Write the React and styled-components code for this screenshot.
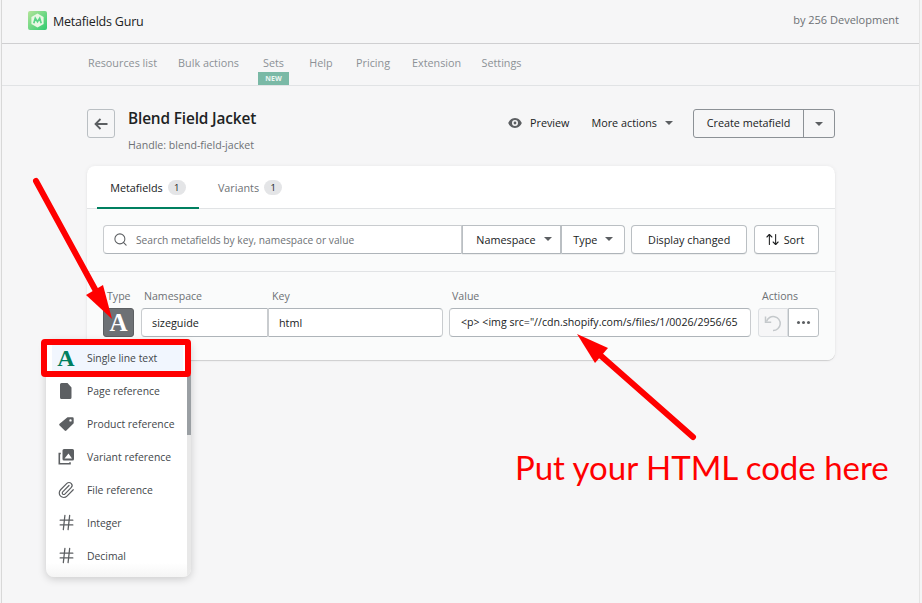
import styled, { createGlobalStyle } from "styled-components";
import { ArrowUpDown, Hash, Paperclip, Search } from "lucide-react";

const GlobalStyle = createGlobalStyle`
  html, body {
    margin: 0;
    padding: 0;
    height: 603px;
    overflow: hidden;
    background: #f4f4f5;
    font-family: "Open Sans", "Noto Sans", sans-serif;
    color: #202223;
  }
  * { box-sizing: border-box; }
`;

const Frame = styled.div`
  position: relative;
  width: 919px;
  height: 603px;
  margin-left: 1px;
  border-left: 1px solid #d8d8d8;
  border-right: 1px solid #e4e4e4;
  background: #f6f6f7;
`;

const TopBar = styled.header`
  height: 44px;
  display: flex;
  align-items: center;
  justify-content: space-between;
  padding: 0 20px 2px 26px;
  border-bottom: 1px solid #cfcfd1;
`;

const Brand = styled.div`
  display: flex;
  align-items: center;
  gap: 6px;
  font-size: 12.5px;
  letter-spacing: -0.2px;
`;

const BrandName = styled.span`
  padding-top: 2px;
`;

const Vendor = styled.div`
  font-size: 11px;
  color: #6d7175;
  margin-top: -3px;
`;

const NavBar = styled.nav`
  height: 42px;
  display: flex;
  padding-left: 86px;
  border-bottom: 1px solid #e1e3e5;
`;

const NavItem = styled.div`
  position: relative;
  width: ${(p) => p.$w}px;
  margin-right: ${(p) => p.$gap}px;
  padding-top: 12px;
  font-size: 10.8px;
  line-height: 14px;
  white-space: nowrap;
  text-align: center;
  color: #8c9196;
`;

const NewBadge = styled.span`
  position: absolute;
  left: -5px;
  bottom: 0;
  width: 31px;
  height: 13px;
  background: #7ab9a6;
  color: #eaf5f1;
  font-size: 7px;
  font-weight: 700;
  line-height: 14px;
  text-align: center;
`;

const Page = styled.main`
  width: 748px;
  margin-left: 85px;
`;

const PageHeader = styled.div`
  display: flex;
  justify-content: space-between;
  padding-top: 23px;
  height: 80px;
`;

const TitleGroup = styled.div`
  display: flex;
  gap: 13px;
`;

const BackButton = styled.div`
  width: 28px;
  height: 29px;
  display: flex;
  align-items: center;
  justify-content: center;
  border: 1px solid #babfc3;
  border-radius: 3px;
  color: #5c5f62;
`;

const Title = styled.h1`
  margin: -1px 0 0;
  font-size: 15.4px;
  font-weight: 600;
  line-height: 22px;
  letter-spacing: -0.15px;
`;

const Handle = styled.div`
  margin-top: 8px;
  font-size: 10.6px;
  line-height: 14px;
  color: #6d7175;
`;

const Actions = styled.div`
  display: flex;
  align-items: flex-start;
`;

const PlainAction = styled.div`
  height: 29px;
  display: flex;
  align-items: center;
  gap: ${(p) => p.$gap}px;
  margin-right: ${(p) => p.$mr}px;
  padding-bottom: 2px;
  font-size: 10.8px;
  color: #202223;
`;

const Caret = styled.span`
  display: inline-block;
  width: 0;
  height: 0;
  border-left: 4px solid transparent;
  border-right: 4px solid transparent;
  border-top: 4px solid #5c5f62;
`;

const SplitButton = styled.div`
  display: flex;
  height: 29px;
  border: 1px solid #8c9196;
  border-radius: 3px;
  font-size: 10.8px;
`;

const SplitMain = styled.div`
  width: 110px;
  display: flex;
  align-items: center;
  justify-content: center;
  padding-bottom: 2px;
  border-right: 1px solid #8c9196;
`;

const SplitSide = styled.div`
  width: 30px;
  display: flex;
  align-items: center;
  justify-content: center;
`;

const Card = styled.section`
  height: 194px;
  border-radius: 8px;
  background: #fff;
  box-shadow: 0 0 4px rgba(23, 24, 24, 0.06), 0 1px 1px rgba(0, 0, 0, 0.14);
  overflow: hidden;
`;

const Tabs = styled.div`
  height: 43px;
  display: flex;
  padding-left: 10px;
  border-bottom: 1px solid #e1e3e5;
`;

const Tab = styled.div`
  width: ${(p) => p.$w}px;
  height: 43px;
  display: flex;
  align-items: center;
  justify-content: center;
  gap: 5px;
  padding-top: 2px;
  font-size: 10.8px;
  color: ${(p) => (p.$active ? "#202223" : "#6d7175")};
  border-bottom: 2px solid ${(p) => (p.$active ? "#008060" : "transparent")};
`;

const Count = styled.span`
  width: 18px;
  height: 15px;
  border-radius: 8px;
  background: #e4e5e7;
  color: #202223;
  font-size: 9.5px;
  line-height: 15px;
  text-align: center;
`;

const FilterBar = styled.div`
  height: 63px;
  display: flex;
  align-items: center;
  padding: 0 16px 2px;
  background: #fafbfb;
  border-bottom: 1px solid #e1e3e5;
`;

const SearchBox = styled.div`
  width: 360px;
  height: 29px;
  display: flex;
  align-items: center;
  gap: 8px;
  padding: 1px 0 0 9px;
  background: #fff;
  border: 1px solid #c9cccf;
  border-bottom-color: #aeb4b9;
  border-radius: 4px 0 0 4px;
  font-size: 10.2px;
  color: #6d7175;
`;

const FilterButton = styled.div`
  width: ${(p) => p.$w}px;
  height: 29px;
  margin-left: ${(p) => p.$ml || 0}px;
  display: flex;
  align-items: center;
  justify-content: center;
  gap: ${(p) => p.$gap || 8}px;
  padding-left: ${(p) => p.$pl || 0}px;
  padding-right: ${(p) => p.$pr || 0}px;
  background: #fff;
  border: 1px solid #babfc3;
  border-bottom-color: #aeb4b9;
  border-radius: ${(p) => p.$radius};
  font-size: 10.8px;
  color: #202223;
  box-shadow: 0 1px 0 rgba(0, 0, 0, 0.05);
`;

const FieldRow = styled.div`
  display: flex;
  height: 88px;
  padding: 16px 16px 0;
  background: #fafbfb;
`;

const Column = styled.div`
  width: ${(p) => p.$w}px;
  margin-left: ${(p) => p.$ml || 0}px;
`;

const ColumnLabel = styled.div`
  height: 20px;
  padding-left: ${(p) => p.$pl}px;
  font-size: 10.6px;
  line-height: 16px;
  color: #6d7175;
`;

const TypeButton = styled.div`
  width: 31px;
  height: 29px;
  display: flex;
  align-items: center;
  justify-content: center;
  background: #6d7175;
  border: 1px solid #5c5f62;
  border-radius: 3px;
  color: #fff;
`;

const SerifMark = styled.span`
  font-family: "Liberation Serif", serif;
  font-weight: 700;
  font-size: ${(p) => p.$size}px;
  line-height: 1;
  color: ${(p) => p.$color || "inherit"};
`;

const TextInput = styled.div`
  height: 29px;
  display: flex;
  align-items: center;
  padding: 0 0 1px ${(p) => p.$pl || 10}px;
  background: #fff;
  border: 1px solid #c9cccf;
  border-top-color: #aeb4b9;
  border-bottom-color: #aeb4b9;
  border-radius: ${(p) => p.$radius};
  font-size: ${(p) => p.$size || 10.8}px;
  white-space: nowrap;
  color: #202223;
`;

const ActionPair = styled.div`
  display: flex;
  height: 29px;
`;

const UndoButton = styled.div`
  width: 30px;
  display: flex;
  align-items: center;
  justify-content: center;
  background: #f6f6f7;
  border: 1px solid #dcdfe2;
  border-radius: 3px 0 0 3px;
`;

const MoreButton = styled.div`
  width: 31px;
  display: flex;
  align-items: center;
  justify-content: center;
  gap: 2px;
  background: #fff;
  border: 1px solid #babfc3;
  border-radius: 0 3px 3px 0;
`;

const Dot = styled.span`
  width: 3px;
  height: 3px;
  border-radius: 50%;
  background: #5c5f62;
`;

const Dropdown = styled.div`
  position: absolute;
  left: 44px;
  top: 340px;
  width: 145px;
  height: 237px;
  padding: 1px 8px 0 6px;
  background: #fff;
  border-radius: 8px;
  box-shadow: 0 2px 8px rgba(0, 0, 0, 0.18);
  overflow: hidden;
`;

const MenuItem = styled.div`
  height: 33px;
  display: flex;
  align-items: center;
  background: ${(p) => (p.$selected ? "#f1f6fe" : "transparent")};
  font-size: 10.4px;
  color: #43474b;
`;

const MenuIcon = styled.span`
  width: 35px;
  padding-right: 7px;
  display: flex;
  justify-content: center;
  color: #5c5f62;
`;

const ScrollTrack = styled.div`
  position: absolute;
  right: 0;
  top: 0;
  bottom: 0;
  width: 4px;
  background: #e8e8e8;
`;

const ScrollThumb = styled.div`
  width: 4px;
  height: 60px;
  margin-top: 35px;
  background: #9a9fa3;
`;

const BottomFade = styled.div`
  position: absolute;
  left: 0;
  right: 0;
  bottom: 0;
  height: 14px;
  background: linear-gradient(rgba(255, 255, 255, 0), rgba(235, 235, 235, 0.5));
`;

const RedBox = styled.div`
  position: absolute;
  left: 39px;
  top: 339px;
  width: 150px;
  height: 38px;
  border: 6px solid #ff0000;
  border-radius: 4px;
`;

const ArrowLayer = styled.svg`
  position: absolute;
  left: -2px;
  top: 0;
  width: 922px;
  height: 603px;
  pointer-events: none;
`;

const Annotation = styled.div`
  position: absolute;
  left: 513px;
  top: 446px;
  font-family: Lato, "Open Sans", sans-serif;
  font-size: 33px;
  line-height: 42px;
  white-space: nowrap;
  color: #ff0000;
`;

function Logo() {
  return (
    <svg width="19" height="19" viewBox="0 0 19 19">
      <defs>
        <linearGradient id="logoGreen" x1="0" y1="0" x2="1" y2="1">
          <stop offset="0" stopColor="#b4e59a" />
          <stop offset="1" stopColor="#2ecb70" />
        </linearGradient>
      </defs>
      <rect width="19" height="19" rx="2" fill="url(#logoGreen)" />
      <path d="M9.5 2.6 15.6 6v7l-6.100 3.400L3.400 13V6z" fill="#e9f8e4" />
      <path d="M5.800 12.200 7.300 7.200 9.500 10.600 11.700 7.200 13.200 12.200" fill="none" stroke="#59d487" strokeWidth="1.700" />
    </svg>
  );
}

function BackArrow() {
  return (
    <svg width="14" height="12" viewBox="0 0 14 12">
      <path d="M13.500 6H2M6.500 1 1.500 6l5 5" fill="none" stroke="#5c5f62" strokeWidth="1.800" />
    </svg>
  );
}

function EyeIcon() {
  return (
    <svg width="14" height="10" viewBox="0 0 14 10">
      <path
        fillRule="evenodd"
        fill="#5c5f62"
        d="M7 0C3.400 0 1 3 .2 5 1 7 3.400 10 7 10s6-3 6.800-5C13 3 10.600 0 7 0zm0 2a3 3 0 1 1 0 6 3 3 0 0 1 0-6zm0 1.600a1.400 1.400 0 1 0 0 2.800 1.400 1.400 0 0 0 0-2.800z"
      />
    </svg>
  );
}

function UndoIcon() {
  return (
    <svg width="18" height="18" viewBox="0 0 18 18">
      <path d="M2.500 7.500A7 7 0 1 1 9 16.500" fill="none" stroke="#c4c8cb" strokeWidth="1.500" />
      <path d="M1.500 2.500V8.200H7.200" fill="none" stroke="#c4c8cb" strokeWidth="1.500" />
    </svg>
  );
}

function PageIcon() {
  return (
    <svg width="12" height="16" viewBox="0 0 12 16">
      <path d="M1.500 0H7.500L11.500 4.500V14.500A1.500 1.500 0 0 1 10 16H1.500A1.500 1.500 0 0 1 0 14.500V1.500A1.500 1.500 0 0 1 1.500 0Z" fill="#5c5f62" />
    </svg>
  );
}

function TagIcon() {
  return (
    <svg width="15" height="14" viewBox="0 0 15 14">
      <path
        fillRule="evenodd"
        fill="#5c5f62"
        d="M8.500.3H13.500A1.200 1.200 0 0 1 14.700 1.500V6.300L7.400 13.500A1.200 1.200 0 0 1 5.700 13.500L.6 8.400A1.200 1.200 0 0 1 .6 6.700ZM11.500 2.200a1.200 1.200 0 1 0 0 2.400 1.200 1.200 0 0 0 0-2.400Z"
      />
    </svg>
  );
}

function VariantIcon() {
  return (
    <svg width="16" height="16" viewBox="0 0 16 16">
      <path fillRule="evenodd" fill="#5c5f62" d="M6 0H14.500A1.500 1.500 0 0 1 16 1.500V10A1.500 1.500 0 0 1 14.500 11.500H6A1.500 1.500 0 0 1 4.500 10V1.500A1.500 1.500 0 0 1 6 0ZM6.500 9.500H14L10.500 4.500 8.500 7Z" />
      <path fill="none" stroke="#5c5f62" strokeWidth="1.600" d="M2.800 4.500H1.300V14.700H12V13.300" />
    </svg>
  );
}

const MENU_ITEMS = [
  { label: "Single line text", icon: <SerifMark $size={24} $color="#007f5f">A</SerifMark>, selected: true },
  { label: "Page reference", icon: <PageIcon /> },
  { label: "Product reference", icon: <TagIcon /> },
  { label: "Variant reference", icon: <VariantIcon /> },
  { label: "File reference", icon: <Paperclip size={18} strokeWidth={1.6} /> },
  { label: "Integer", icon: <Hash size={19} strokeWidth={1.6} /> },
  { label: "Decimal", icon: <Hash size={19} strokeWidth={1.6} /> },
];

export default function App() {
  return (
    <Frame>
      <GlobalStyle />
      <TopBar>
        <Brand>
          <Logo />
          <BrandName>Metafields Guru</BrandName>
        </Brand>
        <Vendor>by 256 Development</Vendor>
      </TopBar>

      <NavBar>
        <NavItem $w={69} $gap={21}>Resources list</NavItem>
        <NavItem $w={61} $gap={24}>Bulk actions</NavItem>
        <NavItem $w={20} $gap={26}>
          Sets
          <NewBadge>NEW</NewBadge>
        </NavItem>
        <NavItem $w={24} $gap={23}>Help</NavItem>
        <NavItem $w={34} $gap={22}>Pricing</NavItem>
        <NavItem $w={48} $gap={21}>Extension</NavItem>
        <NavItem $w={41} $gap={0}>Settings</NavItem>
      </NavBar>

      <Page>
        <PageHeader>
          <TitleGroup>
            <BackButton>
              <BackArrow />
            </BackButton>
            <div>
              <Title>Blend Field Jacket</Title>
              <Handle>Handle: blend-field-jacket</Handle>
            </div>
          </TitleGroup>
          <Actions>
            <PlainAction $gap={8} $mr={22}>
              <EyeIcon />
              Preview
            </PlainAction>
            <PlainAction $gap={8} $mr={20}>
              More actions
              <Caret />
            </PlainAction>
            <SplitButton>
              <SplitMain>Create metafield</SplitMain>
              <SplitSide>
                <Caret />
              </SplitSide>
            </SplitButton>
          </Actions>
        </PageHeader>

        <Card>
          <Tabs>
            <Tab $active $w={102}>
              Metafields
              <Count>1</Count>
            </Tab>
            <Tab $w={102}>
              Variants
              <Count>1</Count>
            </Tab>
          </Tabs>

          <FilterBar>
            <SearchBox>
              <Search size={15} strokeWidth={1.7} color="#5c5f62" />
              Search metafields by key, namespace or value
            </SearchBox>
            <FilterButton $w={99} $pl={4} $radius="0">
              Namespace
              <Caret />
            </FilterButton>
            <FilterButton $w={64} $radius="0 4px 4px 0">
              Type
              <Caret />
            </FilterButton>
            <FilterButton $w={116} $ml={6} $radius="4px">
              Display changed
            </FilterButton>
            <FilterButton $w={65} $ml={7} $gap={4} $pr={4} $radius="4px">
              <ArrowUpDown size={15} strokeWidth={1.7} />
              Sort
            </FilterButton>
          </FilterBar>

          <FieldRow>
            <Column $w={31}>
              <ColumnLabel $pl={4}>Type</ColumnLabel>
              <TypeButton>
                <SerifMark $size={25}>A</SerifMark>
              </TypeButton>
            </Column>
            <Column $w={127} $ml={7}>
              <ColumnLabel $pl={3}>Namespace</ColumnLabel>
              <TextInput $radius="4px 0 0 4px">sizeguide</TextInput>
            </Column>
            <Column $w={175}>
              <ColumnLabel $pl={4}>Key</ColumnLabel>
              <TextInput $radius="0 4px 4px 0">html</TextInput>
            </Column>
            <Column $w={302} $ml={6}>
              <ColumnLabel $pl={3}>Value</ColumnLabel>
              <TextInput $radius="4px" $size={10.6} $pl={11}>
                {'<p> <img src="//cdn.shopify.com/s/files/1/0026/2956/65'}
              </TextInput>
            </Column>
            <Column $w={61} $ml={7}>
              <ColumnLabel $pl={4}>Actions</ColumnLabel>
              <ActionPair>
                <UndoButton>
                  <UndoIcon />
                </UndoButton>
                <MoreButton>
                  <Dot />
                  <Dot />
                  <Dot />
                </MoreButton>
              </ActionPair>
            </Column>
          </FieldRow>
        </Card>
      </Page>

      <Dropdown>
        {MENU_ITEMS.map((item) => (
          <MenuItem key={item.label} $selected={item.selected}>
            <MenuIcon>{item.icon}</MenuIcon>
            {item.label}
          </MenuItem>
        ))}
        <ScrollTrack>
          <ScrollThumb />
        </ScrollTrack>
        <BottomFade />
      </Dropdown>
      <RedBox />

      <ArrowLayer viewBox="0 0 922 603">
        <path d="M36 181 96 291" stroke="#ff0000" strokeWidth="6" strokeLinecap="round" fill="none" />
        <path d="M112 319 86 295 103 285Z" fill="#ff0000" />
        <path d="M693 437 600 355" stroke="#ff0000" strokeWidth="6" strokeLinecap="round" fill="none" />
        <path d="M577 334 608 348 595 363Z" fill="#ff0000" />
      </ArrowLayer>
      <Annotation>Put your HTML code here</Annotation>
    </Frame>
  );
}
